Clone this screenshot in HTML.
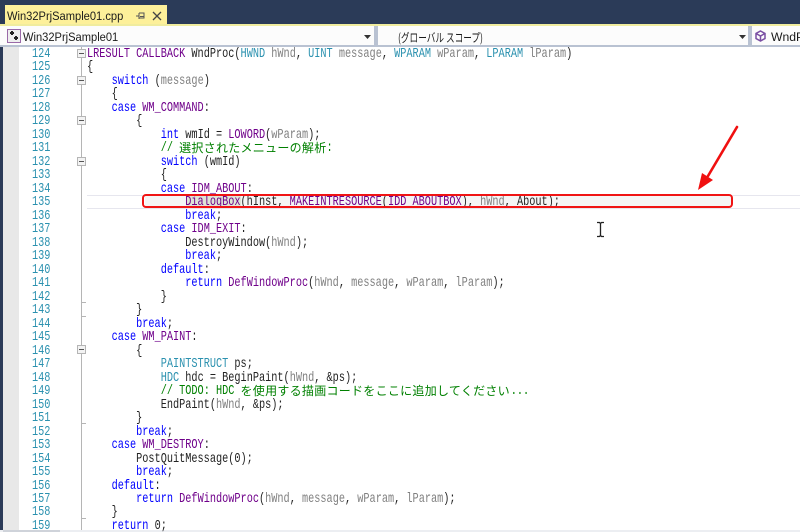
<!DOCTYPE html>
<html>
<head>
<meta charset="utf-8">
<style>
html,body{margin:0;padding:0;width:800px;height:532px;overflow:hidden;background:#fff}
#r{position:relative;width:800px;height:532px;overflow:hidden;font-family:"Liberation Sans","Noto Sans CJK JP",sans-serif}
.a{position:absolute}
.code{position:absolute;font-family:"Liberation Mono",monospace;font-size:14px;color:#222;transform-origin:0 0;transform:scaleX(.731);white-space:normal;width:1000px;filter:blur(.25px)}
.code div{height:13.49px;line-height:13.49px;overflow:visible;white-space:pre}
.code i{font-style:normal}
.k{color:#0000ff}.m{color:#6f008a}.t{color:#2b91af}.p{color:#808080}.c{color:#008000}
.cj{display:inline-block;position:relative;top:-1px;height:13px;line-height:13px;font-family:"Noto Sans CJK JP",sans-serif;font-size:12px;letter-spacing:.28px;transform-origin:0 0;transform:scaleX(1.368);vertical-align:top;white-space:nowrap}
.fb{position:absolute;left:77px;width:7px;height:7px;background:#f3f3f3;border:1px solid #b5b5b5}
.fb:after{content:"";position:absolute;left:1px;top:3px;width:5px;height:1px;background:#555}
.tk{position:absolute;left:81px;width:5px;height:1px;background:#b5b5b5}
.sx{transform-origin:0 0;white-space:nowrap}
</style>
</head>
<body>
<div id="r">
<div class="a" style="left:0;top:0;width:800px;height:24px;background:#2b3b58"></div>
<div class="a" style="left:5px;top:5px;width:162px;height:19px;background:#fdf09a"></div>
<div class="a sx" style="left:7px;top:9px;font-size:12.2px;line-height:15px;color:#1a1a1a;transform:scaleX(.913)">Win32PrjSample01.cpp</div>
<svg class="a" style="left:134px;top:10px" width="30" height="12" viewBox="0 0 30 12"><path d="M2 6H5M5 3V9M5 3H10V8H5M6 6.500H10" fill="none" stroke="#555" stroke-width="1"/><path d="M19 2L27 10M27 2L19 10" stroke="#444" stroke-width="1.300" fill="none"/></svg>
<div class="a" style="left:0;top:24px;width:800px;height:2px;background:#f0ec9e"></div>

<div class="a" style="left:0;top:26px;width:800px;height:20px;background:#fcfcfc"></div>
<div class="a" style="left:0;top:45px;width:800px;height:2px;background:#b9c2d2"></div>
<div class="a" style="left:374px;top:26px;width:4px;height:20px;background:#b9c2d2"></div>
<div class="a" style="left:748px;top:26px;width:4px;height:20px;background:#b9c2d2"></div>
<svg class="a" style="left:7px;top:29px" width="14" height="14" viewBox="0 0 14 14"><rect x=".5" y=".5" width="13" height="13" fill="#eee" stroke="#9a6aa8"/><path d="M3 4H7M5 2V6M7 9H11M9 7V11" stroke="#222" stroke-width="2" fill="none"/></svg>
<div class="a sx" style="left:23px;top:30px;font-size:12.2px;line-height:15px;color:#1a1a1a;transform:scaleX(.913)">Win32PrjSample01</div>
<svg class="a" style="left:364px;top:35px" width="7" height="4"><path d="M0 0H7L3.500 4Z" fill="#333"/></svg>
<div class="a sx" style="left:398px;top:30px;font-size:12px;line-height:15px;color:#1a1a1a;font-family:'Noto Sans CJK JP',sans-serif;transform:scaleX(.72)">(グローバル スコープ)</div>
<svg class="a" style="left:739px;top:35px" width="7" height="4"><path d="M0 0H7L3.500 4Z" fill="#333"/></svg>
<svg class="a" style="left:755px;top:30px" width="11" height="12" viewBox="0 0 11 12"><path d="M5.500 1L10 3.500V8.500L5.500 11L1 8.500V3.500ZM1 3.500L5.500 6L10 3.500M5.500 6V11" fill="none" stroke="#7a4fa3" stroke-width="1.500"/></svg>
<div class="a sx" style="left:771px;top:30px;font-size:12.2px;line-height:15px;color:#1a1a1a">WndProc</div>

<div class="a" style="left:0;top:47px;width:3px;height:485px;background:#2b3b58"></div>
<div class="a" style="left:3px;top:47px;width:16px;height:485px;background:#e8e8e8"></div>
<div class="a" style="left:81px;top:47px;width:1px;height:485px;background:#b5b5b5"></div>
<div class="a" style="left:0;top:530px;width:800px;height:2px;background:#eceef2"></div>
<div class="a" style="left:3px;top:530px;width:57px;height:2px;background:#cfd3da"></div>

<div class="fb" style="top:49px"></div>
<div class="fb" style="top:76px"></div>
<div class="fb" style="top:116px"></div>
<div class="fb" style="top:157px"></div>
<div class="fb" style="top:345px"></div>
<div class="tk" style="top:302px"></div>
<div class="tk" style="top:316px"></div>
<div class="tk" style="top:423px"></div>
<div class="tk" style="top:518px"></div>

<div class="a" style="left:87px;top:195px;width:713px;height:12px;border-top:1px solid #e6e6ee;border-bottom:1px solid #e6e6ee"></div>
<div class="a" style="left:145px;top:196px;width:586px;height:10px;background:#f5f5f5"></div>
<div class="a" style="left:186px;top:196px;width:55px;height:11px;background:#dfe5d6"></div>

<div class="code" style="left:32px;top:48px;color:#2b91af"><div>124</div><div>125</div><div>126</div><div>127</div><div>128</div><div>129</div><div>130</div><div>131</div><div>132</div><div>133</div><div>134</div><div>135</div><div>136</div><div>137</div><div>138</div><div>139</div><div>140</div><div>141</div><div>142</div><div>143</div><div>144</div><div>145</div><div>146</div><div>147</div><div>148</div><div>149</div><div>150</div><div>151</div><div>152</div><div>153</div><div>154</div><div>155</div><div>156</div><div>157</div><div>158</div><div>159</div></div>

<div class="code" style="left:87px;top:48px">
<div><i class="m">LRESULT</i> <i class="m">CALLBACK</i> WndProc(<i class="t">HWND</i> <i class="p">hWnd</i>, <i class="t">UINT</i> <i class="p">message</i>, <i class="t">WPARAM</i> <i class="p">wParam</i>, <i class="t">LPARAM</i> <i class="p">lParam</i>)</div>
<div>{</div>
<div>    <i class="k">switch</i> (<i class="p">message</i>)</div>
<div>    {</div>
<div>    <i class="k">case</i> <i class="m">WM_COMMAND</i>:</div>
<div>        {</div>
<div>            <i class="k">int</i> wmId = <i class="m">LOWORD</i>(<i class="p">wParam</i>);</div>
<div>            <i class="c">// <i class="cj" style="width:201.6px">選択されたメニューの解析</i>:</i></div>
<div>            <i class="k">switch</i> (wmId)</div>
<div>            {</div>
<div>            <i class="k">case</i> <i class="m">IDM_ABOUT</i>:</div>
<div>                <i class="m">DialogBox</i>(hInst, <i class="m">MAKEINTRESOURCE</i>(<i class="m">IDD_ABOUTBOX</i>), <i class="p">hWnd</i>, About);</div>
<div>                <i class="k">break</i>;</div>
<div>            <i class="k">case</i> <i class="m">IDM_EXIT</i>:</div>
<div>                DestroyWindow(<i class="p">hWnd</i>);</div>
<div>                <i class="k">break</i>;</div>
<div>            <i class="k">default</i>:</div>
<div>                <i class="k">return</i> <i class="m">DefWindowProc</i>(<i class="p">hWnd</i>, <i class="p">message</i>, <i class="p">wParam</i>, <i class="p">lParam</i>);</div>
<div>            }</div>
<div>        }</div>
<div>        <i class="k">break</i>;</div>
<div>    <i class="k">case</i> <i class="m">WM_PAINT</i>:</div>
<div>        {</div>
<div>            <i class="t">PAINTSTRUCT</i> ps;</div>
<div>            <i class="t">HDC</i> hdc = BeginPaint(<i class="p">hWnd</i>, &amp;ps);</div>
<div>            <i class="c">// TODO: HDC <i class="cj" style="width:369.6px">を使用する描画コードをここに追加してください</i>...</i></div>
<div>            EndPaint(<i class="p">hWnd</i>, &amp;ps);</div>
<div>        }</div>
<div>        <i class="k">break</i>;</div>
<div>    <i class="k">case</i> <i class="m">WM_DESTROY</i>:</div>
<div>        PostQuitMessage(0);</div>
<div>        <i class="k">break</i>;</div>
<div>    <i class="k">default</i>:</div>
<div>        <i class="k">return</i> <i class="m">DefWindowProc</i>(<i class="p">hWnd</i>, <i class="p">message</i>, <i class="p">wParam</i>, <i class="p">lParam</i>);</div>
<div>    }</div>
<div>    <i class="k">return</i> 0;</div>
</div>

<div class="a" style="left:142px;top:194px;width:587px;height:10px;border:2px solid #f01414;border-radius:4px"></div>
<svg class="a" style="left:690px;top:120px" width="55" height="72" viewBox="0 0 55 72"><path d="M47 7L18 56" stroke="#f01010" stroke-width="2.600" stroke-linecap="round" fill="none"/><path d="M8 70L12 53L23 60Z" fill="#f01010"/></svg>
<svg class="a" style="left:596px;top:221px" width="9" height="17" viewBox="0 0 9 17"><path d="M1 1.500H3.500L4.500 2.500L5.500 1.500H8M4.500 2.500V14.500M1 15.500H3.500L4.500 14.500L5.500 15.500H8" fill="none" stroke="#222" stroke-width="1.300"/></svg>
</div>
</body>
</html>
